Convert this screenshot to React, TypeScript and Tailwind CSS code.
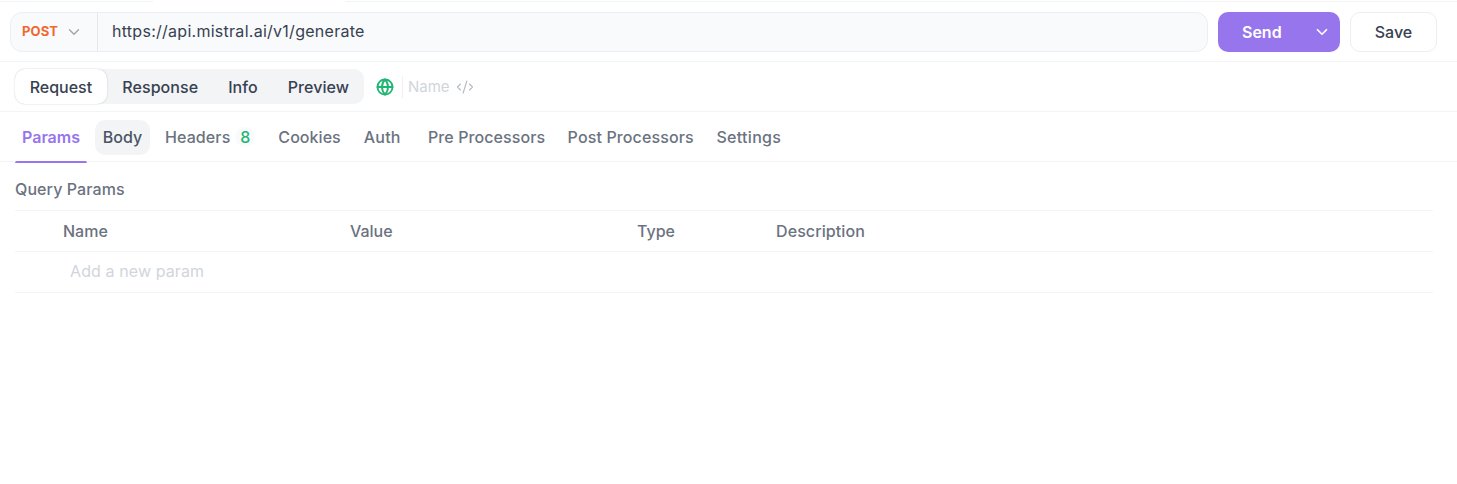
import { ChevronDown, Globe, CodeXml } from "lucide-react";

const sub = ["Response", "Info", "Preview"];

export default function App() {
  return (
    <div className="h-[484px] w-[1457px] overflow-hidden bg-white font-['Inter',sans-serif] text-[16px] text-[#4b5563]">
      <div className="flex h-[2px] border-b border-[#f3f4f6]">
        <div className="ml-[153px] h-[2px] w-[192px] bg-white" />
      </div>
      <div className="flex h-[60px] items-center border-b border-[#f3f4f6] pl-[10px] pr-[20px]">
        <div className="flex h-[40px] flex-1 items-center rounded-[12px] border border-[#eceef1] bg-[#f9fafb]">
          <div className="flex h-full w-[87px] items-center border-r border-[#e5e7eb] pl-[11px]">
            <span className="text-[13px] font-bold tracking-[0.1px] text-[#f0682e]">POST</span>
            <ChevronDown size={18} strokeWidth={1.75} className="ml-[7px] text-[#9ca3af]" />
          </div>
          <span className="pb-[2px] pl-[14px] tracking-[0.27px] text-[#374151]">https://api.mistral.ai/v1/generate</span>
        </div>
        <div className="ml-[10px] flex h-[40px] w-[122px] items-center rounded-[10px] bg-[#9775ed] pl-[24px] text-white">
          <span className="font-semibold">Send</span>
          <ChevronDown size={18} strokeWidth={2.25} className="ml-[31px]" />
        </div>
        <div className="ml-[10px] flex h-[40px] w-[87px] items-center justify-center rounded-[10px] border border-[#eceef1] font-[450] text-[#374151]">
          Save
        </div>
      </div>
      <div className="flex h-[50px] items-center border-b border-[#f3f4f6] pl-[15px]">
        <div className="flex h-[35px] w-[349px] items-center rounded-[10px] bg-[#f3f4f6]">
          <div className="mr-[0.5px] flex h-[35px] w-[93px] items-center justify-center rounded-[10px] bg-white font-[450] text-[#374151] shadow-[0_0_2px_rgba(0,0,0,0.2)]">
            Request
          </div>
          {sub.map((s) => (
            <div key={s} className="px-[15px] font-[450] tracking-[0.06px] text-[#374151]">{s}</div>
          ))}
        </div>
        <Globe size={18} strokeWidth={2.5} className="ml-[12px] text-[#22b573]" />
        <div className="ml-[8px] h-[22px] w-px bg-[#f0f1f3]" />
        <span className="ml-[5px] pt-[1px] text-[15px] text-[#d1d5db]">Name</span>
        <CodeXml size={18} strokeWidth={1.5} className="ml-[6px] text-[#b5b9c0]" />
      </div>
      <div className="flex h-[50px] items-center border-b border-[#f3f4f6] pl-[15px] font-[450] text-[#6b7280]">
        <div className="relative flex h-[50px] w-[72px] items-center justify-center font-semibold text-[#9775ed]">
          Params
          <div className="absolute bottom-[-1px] left-0 h-[2px] w-full rounded-t-[2px] bg-[#9775ed]" />
        </div>
        <div className="ml-[8px] mt-[1px] flex h-[35px] w-[55px] items-center justify-center rounded-[10px] bg-[#f3f4f6] text-[#4b5563]">Body</div>
        <span className="ml-[15px] tracking-[0.1px]">Headers</span>
        <span className="ml-[5px] flex h-[20px] w-[20px] items-center justify-center rounded-full bg-[#f9fafb] text-[#22b573]">8</span>
        <span className="ml-[23px] tracking-[0.05px]">Cookies</span>
        <span className="ml-[23px] tracking-[0.2px]">Auth</span>
        <span className="ml-[27.4px] tracking-[0.08px]">Pre Processors</span>
        <span className="ml-[22.5px] tracking-[0.13px]">Post Processors</span>
        <span className="ml-[22.6px] tracking-[0.3px]">Settings</span>
      </div>
      <div className="pl-[15px] pr-[24px]">
        <div className="flex h-[49px] items-center border-b border-[#f3f4f6] pt-[6px] font-[450] tracking-[0.1px] text-[#6b7280]">Query Params</div>
        <div className="flex h-[41px] items-center border-b border-[#f3f4f6] font-[450] text-[#6b7280]">
          <span className="w-[287px] pl-[48px]">Name</span>
          <span className="w-[288px] pl-[48px]">Value</span>
          <span className="w-[186px] pl-[47px]">Type</span>
          <span className="tracking-[0.1px]">Description</span>
        </div>
        <div className="flex h-[41px] items-center border-b border-[#f3f4f6] pb-[2px] pl-[55px] tracking-[0.1px] text-[#d1d5db]">Add a new param</div>
      </div>
    </div>
  );
}
